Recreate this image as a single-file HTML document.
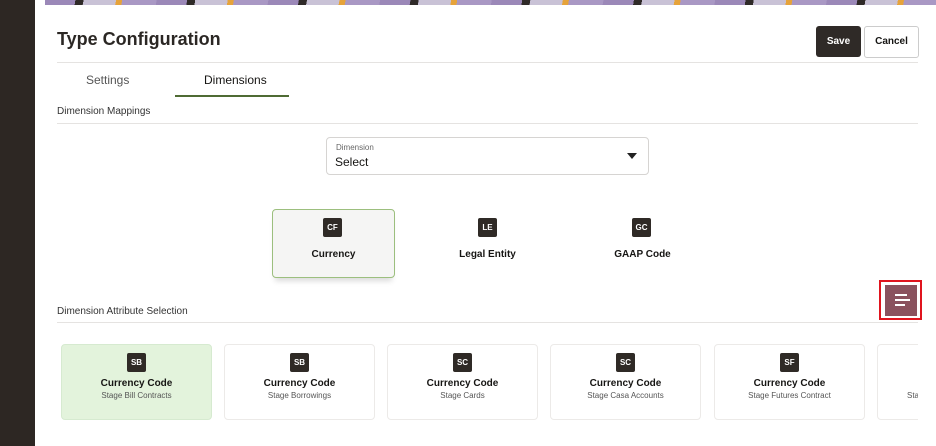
<!DOCTYPE html>
<html><head><style>
body{margin:0;width:936px;height:446px;overflow:hidden;background:#fff;font-family:"Liberation Sans",sans-serif;position:relative;color:#161513}
.a{position:absolute}
.side{left:0;top:0;width:35px;height:446px;background:#2d2723}
.banner{left:45px;top:0;width:891px;height:5px;background:repeating-linear-gradient(100deg,#9b88b8 0 30px,#2f2a28 30px 38px,#c9c2d6 38px 70px,#e6a33a 70px 76px,#a998c4 76px 110px)}
.badge{position:absolute;width:19px;height:19px;background:#2f2a26;color:#fff;font-size:8px;font-weight:bold;text-align:center;line-height:19px;border-radius:2px}
.card{position:absolute;top:344px;width:151px;height:76px;border:1px solid #eceae8;border-radius:4px;background:#fff;text-align:center;box-sizing:border-box}
.card .badge{left:65px;top:8px}
.card .t{position:absolute;top:33px;width:100%;font-size:10px;font-weight:bold}
.card .s{position:absolute;top:46px;width:100%;font-size:8px;color:#555;white-space:nowrap}
.line{position:absolute;height:1px;background:#e5e3e1}
</style></head><body>
<div class="a side"></div>
<div class="a banner"></div>
<div class="a" style="left:57px;top:29px;font-size:18px;font-weight:bold;color:#2b2724">Type Configuration</div>
<div class="a" style="left:816px;top:26px;width:45px;height:31px;background:#2f2a27;color:#fff;border-radius:3px;font-size:10px;font-weight:bold;text-align:center;line-height:31px">Save</div>
<div class="a" style="left:864px;top:26px;width:53px;height:30px;border:1px solid #ccc;border-radius:3px;font-size:10px;font-weight:bold;text-align:center;line-height:30px">Cancel</div>
<div class="line" style="left:57px;top:62px;width:861px"></div>
<div class="a" style="left:86px;top:73px;font-size:12px;color:#555">Settings</div>
<div class="a" style="left:204px;top:73px;font-size:12px">Dimensions</div>
<div class="a" style="left:175px;top:95px;width:114px;height:2px;background:#4f6b34"></div>
<div class="a" style="left:57px;top:106px;font-size:10px;color:#333">Dimension Mappings</div>
<div class="line" style="left:57px;top:123px;width:861px"></div>
<div class="a" style="left:326px;top:137px;width:323px;height:38px;border:1px solid #d6d4d2;border-radius:4px;box-sizing:border-box"></div>
<div class="a" style="left:336px;top:143px;font-size:8px;color:#666">Dimension</div>
<div class="a" style="left:335px;top:155px;font-size:12px">Select</div>
<div class="a" style="left:627px;top:153px;width:0;height:0;border-left:5px solid transparent;border-right:5px solid transparent;border-top:6px solid #222"></div>
<div class="a" style="left:272px;top:209px;width:123px;height:69px;border:1px solid #9cbf7e;border-radius:4px;background:#f5f5f4;box-sizing:border-box;box-shadow:0 6px 6px -3px rgba(0,0,0,.15)"></div>
<div class="badge" style="left:323px;top:218px">CF</div>
<div class="a" style="left:272px;top:249px;width:123px;text-align:center;font-size:10px;font-weight:bold">Currency</div>
<div class="badge" style="left:478px;top:218px">LE</div>
<div class="a" style="left:430px;top:249px;width:115px;text-align:center;font-size:10px;font-weight:bold">Legal Entity</div>
<div class="badge" style="left:632px;top:218px">GC</div>
<div class="a" style="left:585px;top:249px;width:115px;text-align:center;font-size:10px;font-weight:bold">GAAP Code</div>
<div class="a" style="left:879px;top:280px;width:43px;height:40px;border:2px solid #e0141e;box-sizing:border-box"></div>
<div class="a" style="left:885px;top:285px;width:32px;height:31px;background:#8a525e"></div>
<div class="a" style="left:895px;top:294px;width:12px;height:2px;background:#fff"></div>
<div class="a" style="left:895px;top:299px;width:15px;height:2px;background:#fff"></div>
<div class="a" style="left:895px;top:304px;width:10px;height:2px;background:#fff"></div>
<div class="a" style="left:57px;top:306px;font-size:10px;color:#333">Dimension Attribute Selection</div>
<div class="line" style="left:57px;top:322px;width:861px"></div>
<div style="position:absolute;left:0;top:0;width:918px;height:446px;overflow:hidden">
<div class="card" style="left:61px;background:#e3f3dc;border-color:#d6ead0"><div class="badge">SB</div><div class="t">Currency Code</div><div class="s">Stage Bill Contracts</div></div>
<div class="card" style="left:224px"><div class="badge">SB</div><div class="t">Currency Code</div><div class="s">Stage Borrowings</div></div>
<div class="card" style="left:387px"><div class="badge">SC</div><div class="t">Currency Code</div><div class="s">Stage Cards</div></div>
<div class="card" style="left:550px"><div class="badge">SC</div><div class="t">Currency Code</div><div class="s">Stage Casa Accounts</div></div>
<div class="card" style="left:714px"><div class="badge">SF</div><div class="t">Currency Code</div><div class="s">Stage Futures Contract</div></div>
<div class="card" style="left:877px"><div class="s" style="left:29px;width:auto">Sta</div></div>
</div>
</body></html>
